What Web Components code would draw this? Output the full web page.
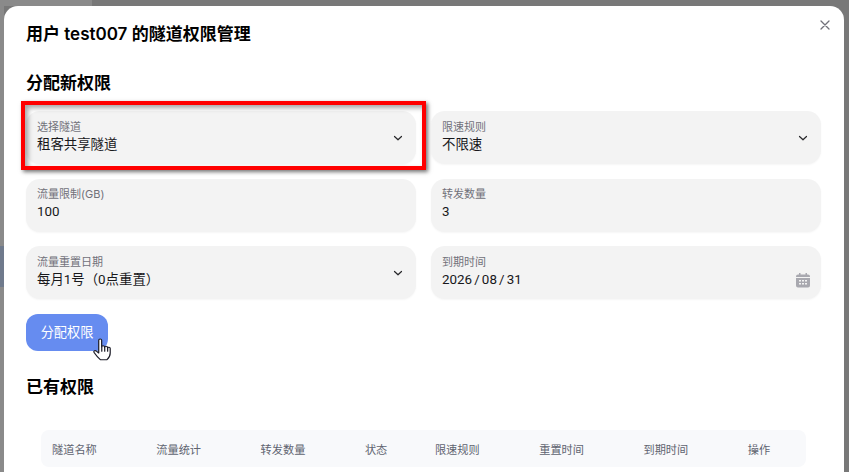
<!DOCTYPE html>
<html lang="zh-CN">
<head>
<meta charset="utf-8">
<title>隧道权限管理</title>
<style>
  html, body { margin: 0; height: 100%; overflow: hidden; }
  body { font-family: Inter, "Noto Sans CJK SC", sans-serif; }
</style>
</head>
<body>
<tunnel-backdrop>
  <perm-modal heading="用户 test007 的隧道权限管理">
    <section-title>分配新权限</section-title>
    <form-grid>
      <form-field label="选择隧道" value="租客共享隧道" kind="select" marked></form-field>
      <form-field label="限速规则" value="不限速" kind="select"></form-field>
      <form-field label="流量限制(GB)" value="100"></form-field>
      <form-field label="转发数量" value="3"></form-field>
      <form-field label="流量重置日期" value="每月1号（0点重置）" kind="select"></form-field>
      <form-field label="到期时间" value="2026 / 08 / 31" kind="date"></form-field>
    </form-grid>
    <primary-button>分配权限</primary-button>
    <section-title class="existing">已有权限</section-title>
    <perm-table columns="隧道名称,流量统计,转发数量,状态,限速规则,重置时间,到期时间,操作"></perm-table>
  </perm-modal>
</tunnel-backdrop>

<script>
const backdropStyles = `
  :host {
    display: block;
    position: relative;
    height: 472px;
    overflow: hidden;
    background: #787878;
    padding: 6px 5px 0 4px;
    box-sizing: border-box;
  }
  .patch { position: absolute; }
  .top { left: 0; top: 0; width: 92px; height: 6px; background: #8a8a8a; }
  .left { left: 0; top: 6px; width: 4px; height: 466px; background: #8a8a8a; }
  .blue { left: 0; top: 246px; width: 4px; height: 41px; background: #6f7a8c; }
`;

class TunnelBackdrop extends HTMLElement {
  constructor() {
    super();
    this.attachShadow({ mode: 'open' }).innerHTML = `
      <style>${backdropStyles}</style>
      <div class="patch top"></div>
      <div class="patch left"></div>
      <div class="patch blue"></div>
      <slot></slot>
    `;
  }
}

const modalStyles = `
  :host {
    display: block;
    position: relative;
    height: 500px;
    background: #fff;
    border-radius: 14px 14px 0 0;
    padding: 16px 22px 0;
    box-sizing: border-box;
  }
  h1 {
    margin: 0;
    font-size: 17px;
    line-height: 24px;
    font-weight: 600;
    color: #000;
  }
  .close {
    position: absolute;
    top: 12.500px;
    right: 13.500px;
    width: 12px;
    height: 12px;
    color: #71717a;
  }
  .close svg { display: block; }
  .body { margin-top: 25px; }
`;

class PermModal extends HTMLElement {
  constructor() {
    super();
    this.attachShadow({ mode: 'open' }).innerHTML = `
      <style>${modalStyles}</style>
      <h1></h1>
      <div class="close">
        <svg width="12" height="12" viewBox="0 0 12 12" fill="none" stroke="currentColor" stroke-width="1.3" stroke-linecap="round">
          <path d="M2 2l8 8M10 2l-8 8"/>
        </svg>
      </div>
      <div class="body"><slot></slot></div>
    `;
  }
  connectedCallback() {
    this.shadowRoot.querySelector('h1').textContent = this.getAttribute('heading') ?? '';
  }
}

class SectionTitle extends HTMLElement {
  constructor() {
    super();
    this.attachShadow({ mode: 'open' }).innerHTML = `
      <style>
        :host {
          display: block;
          font-size: 17px;
          line-height: 24px;
          font-weight: 600;
          color: #000;
        }
        :host(.existing) { margin-top: 24px; }
      </style>
      <slot></slot>
    `;
  }
}

class FormGrid extends HTMLElement {
  constructor() {
    super();
    this.attachShadow({ mode: 'open' }).innerHTML = `
      <style>
        :host {
          display: grid;
          grid-template-columns: 390px 390px;
          column-gap: 15px;
          row-gap: 14.500px;
          margin-top: 16px;
        }
      </style>
      <slot></slot>
    `;
  }
}

const fieldStyles = `
  :host {
    display: flex;
    align-items: center;
    position: relative;
    height: 53px;
    background: #f3f3f3;
    border-radius: 14px;
    padding: 0 12px 0 11px;
    box-sizing: border-box;
    box-shadow: 0 1px 2px rgba(0, 0, 0, .04);
  }
  .text { flex: 1; min-width: 0; padding-bottom: 2px; }
  .label { font-size: 11px; line-height: 14px; color: #71717a; }
  .value {
    margin-top: 1px;
    font-family: Roboto, "Noto Sans CJK SC", sans-serif;
    font-size: 13.400px;
    line-height: 19px;
    color: #18181b;
  }
  :host([kind='date']) .value { word-spacing: -1.200px; }
  :host([kind='date']) .slot-icon { margin: 14px -1px 0 0; }
  .icon { flex: none; display: block; }
  .mark {
    position: absolute;
    left: -5px;
    top: -10px;
    width: 405px;
    height: 69px;
    box-sizing: border-box;
    border: 4px solid #f00;
    box-shadow: 2px 2px 4px rgba(0, 0, 0, .55), inset 3px 3px 5px rgba(0, 0, 0, .35);
  }
`;

const chevron = `<svg class="icon" width="12" height="12" viewBox="0 0 12 12" fill="none" stroke="#27272a" stroke-width="1.200" stroke-linecap="round" stroke-linejoin="round"><path d="M2.500 4.500L6 7.800l3.500-3.300"/></svg>`;
const calendar = `<svg class="icon" width="14" height="16" viewBox="0 0 14 16"><path fill="#a8a8af" d="M3 1h1.500v2H3zM9.500 1H11v2H9.500zM2 2.500h10A2 2 0 0 1 14 4.500V5H0v-.5A2 2 0 0 1 2 2.500zM0 6h14v7.500a2 2 0 0 1-2 2H2a2 2 0 0 1-2-2z"/><path fill="#f3f3f3" d="M3 8h2v1.600H3zM6 8h2v1.600H6zM9 8h2v1.600H9zM3 11h2v1.600H3zM6 11h2v1.600H6zM9 11h2v1.600H9z"/></svg>`;

class FormField extends HTMLElement {
  constructor() {
    super();
    this.attachShadow({ mode: 'open' }).innerHTML = `
      <style>${fieldStyles}</style>
      <div class="text"><div class="label"></div><div class="value"></div></div>
      <span class="slot-icon"></span>
    `;
  }
  connectedCallback() {
    const root = this.shadowRoot;
    root.querySelector('.label').textContent = this.getAttribute('label') ?? '';
    root.querySelector('.value').textContent = this.getAttribute('value') ?? '';
    const kind = this.getAttribute('kind');
    root.querySelector('.slot-icon').innerHTML = kind === 'select' ? chevron : kind === 'date' ? calendar : '';
    if (this.hasAttribute('marked')) {
      const mark = document.createElement('div');
      mark.className = 'mark';
      root.append(mark);
    }
  }
}

const buttonStyles = `
  :host {
    display: block;
    position: relative;
    width: 82px;
    height: 37px;
    margin-top: 15px;
    background: #668cf0;
    border-radius: 12px;
    color: #fff;
    font-size: 13.200px;
    line-height: 37px;
    text-align: center;
  }
  svg { position: absolute; left: 65.500px; top: 24px; }
`;

class PrimaryButton extends HTMLElement {
  constructor() {
    super();
    this.attachShadow({ mode: 'open' }).innerHTML = `
      <style>${buttonStyles}</style>
      <slot></slot>
      <svg width="22" height="25" viewBox="0 0 18 24" preserveAspectRatio="none" stroke="#1c1c28" stroke-width="1" stroke-linejoin="round" stroke-linecap="round">
        <path fill="#fff" d="M5.500 2.200c0-1.600 2.400-1.600 2.400 0v6.300c.2-1.500 2.300-1.500 2.400 0v.5c.2-1.400 2.300-1.400 2.400 0v.7c.2-1.200 2.200-1.100 2.200.3v4.500c0 2.900-1.100 4.900-2.600 6.300H6.800C5 19.200 3.500 17 1.700 14c-.8-1.400.7-2.500 1.900-1.400l1.900 1.800z"/>
        <path fill="none" d="M8 8.600v4.200M10.400 9v3.800M12.800 9.800v3"/>
      </svg>
    `;
  }
}

const tableStyles = `
  :host {
    display: grid;
    grid-template-columns: repeat(3, 104.300px) 70px repeat(3, 104.300px) auto;
    align-items: center;
    width: 765px;
    height: 37px;
    margin: 31px 0 0 15px;
    padding-left: 11px;
    box-sizing: border-box;
    background: #f8f9fb;
    border-radius: 8px;
    font-size: 11.200px;
    color: #5f6470;
  }
`;

class PermTable extends HTMLElement {
  constructor() {
    super();
    this.attachShadow({ mode: 'open' }).innerHTML = `<style>${tableStyles}</style>`;
  }
  connectedCallback() {
    for (const name of (this.getAttribute('columns') ?? '').split(',')) {
      const cell = document.createElement('div');
      cell.textContent = name;
      this.shadowRoot.append(cell);
    }
  }
}

customElements.define('tunnel-backdrop', TunnelBackdrop);
customElements.define('perm-modal', PermModal);
customElements.define('section-title', SectionTitle);
customElements.define('form-grid', FormGrid);
customElements.define('form-field', FormField);
customElements.define('primary-button', PrimaryButton);
customElements.define('perm-table', PermTable);
</script>
</body>
</html>
